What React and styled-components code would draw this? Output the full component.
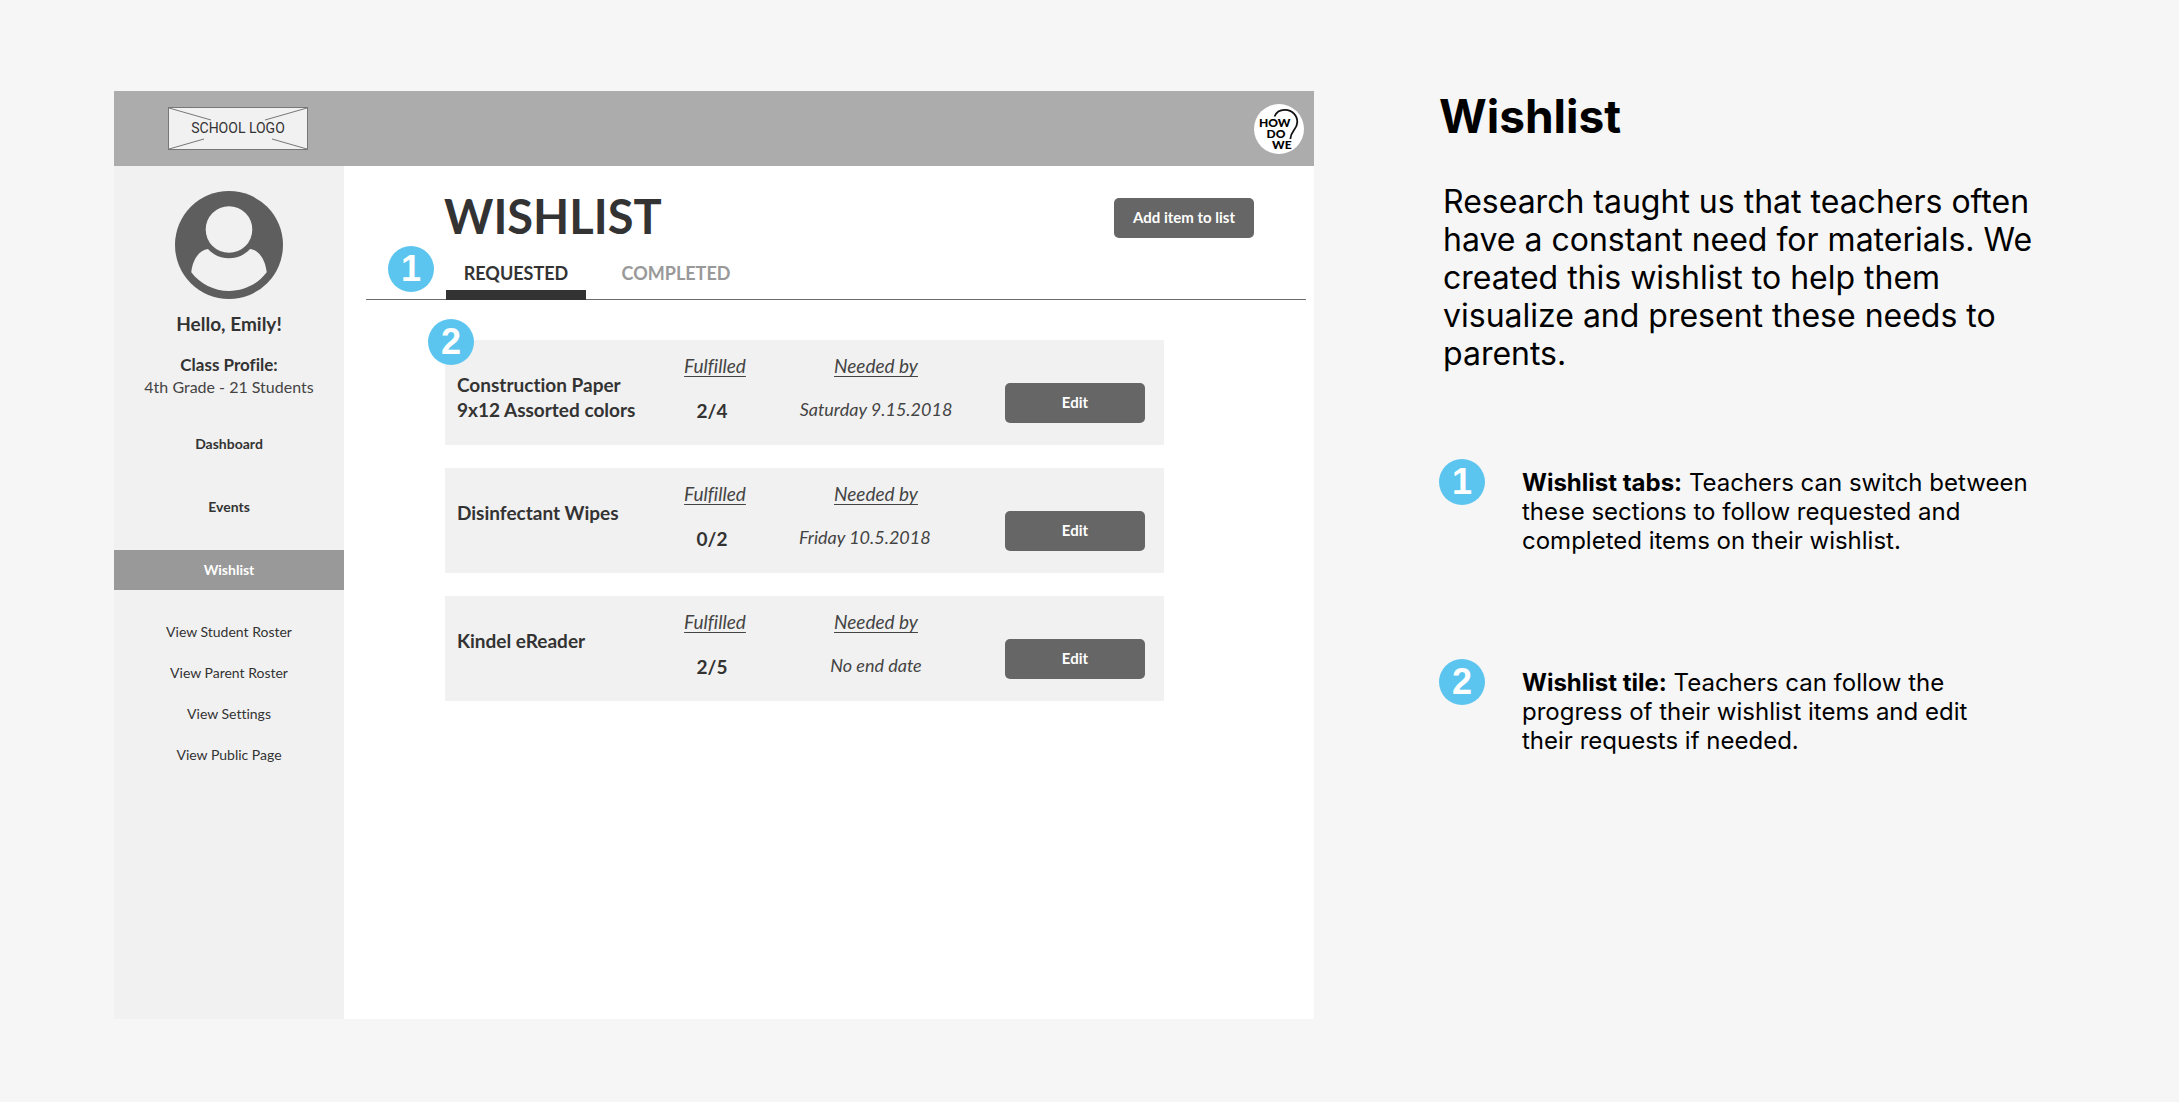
import React, { useState } from "react";
import styled, { createGlobalStyle } from "styled-components";

const humanist = `Lato, "Open Sans", sans-serif`;
const grotesque = `Inter, Roboto, sans-serif`;

const GlobalStyle = createGlobalStyle`
  *, *::before, *::after { box-sizing: border-box; }
  body {
    margin: 0;
    background: #f6f6f6;
    color: #333;
    font-family: ${humanist};
    font-variant-ligatures: none;
  }
  h1, h2, p, ul, ol { margin: 0; padding: 0; }
  ul, ol { list-style: none; }
  button { border: 0; margin: 0; padding: 0; font-family: inherit; cursor: pointer; }
  a { color: inherit; text-decoration: none; }
`;

const Page = styled.div`
  display: grid;
  grid-template-columns: minmax(0, 2fr) minmax(0, 1fr);
  gap: 125px;
  min-height: 100vh;
  padding: 91px 140px 83px 114px;
`;

const Frame = styled.div`
  display: flex;
  flex-direction: column;
  background: #fff;
`;

const Header = styled.header`
  display: flex;
  align-items: center;
  justify-content: space-between;
  height: 75px;
  padding: 0 10px 0 54px;
  background: #acacac;
`;

const Body = styled.div`
  display: flex;
  flex: 1;
`;

const Sidebar = styled.aside`
  display: flex;
  flex-direction: column;
  align-items: center;
  width: 230px;
  padding-top: 25px;
  background: #f1f1f1;
  text-align: center;
`;

const Greeting = styled.p`
  margin-top: 13px;
  font-size: 19px;
  line-height: 24px;
  font-weight: 700;
`;

const ProfileTitle = styled.p`
  margin-top: 18px;
  font-size: 17px;
  line-height: 22px;
  font-weight: 700;
`;

const ProfileText = styled.p`
  font-size: 16px;
  line-height: 22px;
  font-weight: 400;
  color: #444;
`;

const MainNav = styled.nav`
  display: flex;
  flex-direction: column;
  gap: 23px;
  width: 100%;
  margin-top: 26px;
`;

const MainNavLink = styled.a`
  font-size: 14px;
  line-height: 40px;
  font-weight: 700;
  color: ${(p) => (p.$active ? "#fff" : "#333")};
  background: ${(p) => (p.$active ? "#999" : "transparent")};
`;

const SubNav = styled.nav`
  display: flex;
  flex-direction: column;
  width: 100%;
  margin-top: 21px;
`;

const SubNavLink = styled.a`
  font-size: 14px;
  line-height: 41px;
`;

const Main = styled.main`
  flex: 1;
  min-width: 0;
  padding-top: 22px;
`;

const TitleRow = styled.div`
  display: flex;
  align-items: flex-start;
  justify-content: space-between;
  padding: 0 60px 0 100px;
`;

const Title = styled.h1`
  font-size: 47px;
  line-height: 56px;
  font-weight: 700;
`;

const Button = styled.button`
  width: 140px;
  height: 40px;
  padding-bottom: 3px;
  border-radius: 5px;
  background: #666;
  color: #fff;
  font-size: 15px;
  font-weight: 700;
`;

const AddButton = styled(Button)`
  margin-top: 10px;
`;

const Badge = styled.span`
  flex: none;
  width: 46px;
  height: 46px;
  border-radius: 50%;
  background: #5bc5ef;
  color: #fff;
  font: 700 36px/46px "Liberation Sans", Arial, sans-serif;
  text-align: center;
`;

const TabBar = styled.div`
  display: flex;
  align-items: flex-end;
  gap: 12px;
  margin: 2px 8px 0 22px;
  padding-left: 22px;
  border-bottom: 1px solid #6c6c6c;
`;

const TabBadge = styled(Badge)`
  margin-bottom: 7px;
`;

const Tabs = styled.div`
  display: flex;
  gap: 20px;
  margin-bottom: -1px;
`;

const Tab = styled.button`
  width: 140px;
  padding-bottom: 5px;
  border-bottom: 10px solid ${(p) => (p.$active ? "#333" : "transparent")};
  background: none;
  color: ${(p) => (p.$active ? "#333" : "#999")};
  font-size: 18px;
  line-height: 24px;
  font-weight: 700;
`;

const TileList = styled.ul`
  display: flex;
  flex-direction: column;
  gap: 23px;
  padding: 40px 150px 40px 101px;
`;

const Tile = styled.li`
  position: relative;
  display: flex;
  align-items: flex-start;
  min-height: 105px;
  padding: 0 19px 0 12px;
  background: #f1f1f1;
`;

const TileBadge = styled(Badge)`
  position: absolute;
  top: -21px;
  left: -17px;
`;

const ItemName = styled.h2`
  flex: 1;
  padding-top: 32px;
  font-size: 19px;
  line-height: 25px;
  font-weight: 700;
  white-space: pre-line;
`;

const Fact = styled.div`
  display: flex;
  flex-direction: column;
  gap: 19px;
  width: ${(p) => p.$width}px;
  margin-right: 52px;
  padding-top: 14px;
  text-align: center;
`;

const FactLabel = styled.p`
  font-size: 19px;
  line-height: 24px;
  font-style: italic;
  font-weight: 400;
  color: #444;
  text-decoration: underline;
  text-decoration-thickness: 1px;
  text-underline-offset: 3px;
  text-decoration-skip-ink: none;
`;

const Count = styled.p`
  padding-right: 6px;
  font-size: 19px;
  line-height: 28px;
  font-weight: 700;
`;

const DueDate = styled.p`
  font-size: 18px;
  line-height: 24px;
  font-style: italic;
  text-align: ${(p) => p.$align};
  white-space: nowrap;
  color: #444;
`;

const EditButton = styled(Button)`
  margin-top: 43px;
`;

const Notes = styled.aside`
  color: #000;
  font-family: ${grotesque};
`;

const NotesTitle = styled.h2`
  font-size: 46px;
  line-height: 50px;
  font-weight: 700;
`;

const Intro = styled.p`
  margin-top: 42px;
  padding-left: 4px;
  font-size: 32px;
  line-height: 38px;
`;

const NoteList = styled.ol`
  display: flex;
  flex-direction: column;
  gap: 104px;
  margin-top: 86px;
`;

const Note = styled.li`
  display: flex;
  align-items: flex-start;
  gap: 37px;
  padding-right: 8px;
`;

const NoteText = styled.p`
  padding-top: 9px;
  font-size: 24px;
  line-height: 29px;
`;

const LogoWord = styled.text`
  font: 900 12px Lato, sans-serif;
`;

const PlaceholderText = styled.text`
  font: 400 14px Roboto, sans-serif;
`;

function SchoolLogo() {
  return (
    <svg width="140" height="43" viewBox="0 0 140 43" role="img" aria-label="School logo">
      <rect x="0.5" y="0.5" width="139" height="42" fill="#f1f1f1" stroke="#777" />
      <path d="M1 1L43 13M139 1L97 13M1 42L36 32M139 42L104 32" stroke="#777" fill="none" />
      <PlaceholderText x="70" y="26" textAnchor="middle" fill="#333">SCHOOL LOGO</PlaceholderText>
    </svg>
  );
}

function BrandLogo() {
  return (
    <svg width="50" height="50" viewBox="0 0 50 50" role="img" aria-label="How do we">
      <circle cx="25" cy="25" r="25" fill="#fff" />
      <path
        d="M20.5 12.5C22.5 7.5 27 5.8 31 5.9C38.5 6.2 43.3 11.5 43.3 18C43.3 25.5 36.8 26.5 36.3 35"
        fill="none"
        stroke="#111"
        strokeWidth="1.8"
      />
      <LogoWord x="5" y="23">HOW</LogoWord>
      <LogoWord x="12.5" y="34">DO</LogoWord>
      <LogoWord x="18" y="45">WE</LogoWord>
    </svg>
  );
}

function Avatar() {
  return (
    <svg width="108" height="108" viewBox="0 0 108 108" role="img" aria-label="Emily">
      <circle cx="54" cy="54" r="54" fill="#5e5e5e" />
      <circle cx="54" cy="38.5" r="23.3" fill="#f1f1f1" />
      <path
        d="M33 58C24 59 17.5 69 16.3 81.3C25 93 39 100 54 100C69 100 83 93 91.7 81.3C90.5 69 84 59 75 58C64 70.4 44 70.4 33 58Z"
        fill="#f1f1f1"
      />
    </svg>
  );
}

const mainLinks = ["Dashboard", "Events", "Wishlist"];
const subLinks = ["View Student Roster", "View Parent Roster", "View Settings", "View Public Page"];
const tabs = ["REQUESTED", "COMPLETED"];
const items = [
  { name: "Construction Paper\n9x12 Assorted colors", count: "2/4", due: "Saturday 9.15.2018", badge: "2" },
  { name: "Disinfectant Wipes", count: "0/2", due: "Friday 10.5.2018", align: "left" },
  { name: "Kindel eReader", count: "2/5", due: "No end date" },
];
const notes = [
  {
    title: "Wishlist tabs:",
    text: "Teachers can switch between these sections to follow requested and completed items on their wishlist.",
  },
  {
    title: "Wishlist tile:",
    text: "Teachers can follow the progress of their wishlist items and edit their\u00a0requests if needed.",
  },
];

export default function App() {
  const [tab, setTab] = useState(tabs[0]);
  return (
    <>
      <GlobalStyle />
      <Page>
        <Frame>
          <Header>
            <SchoolLogo />
            <BrandLogo />
          </Header>
          <Body>
            <Sidebar>
              <Avatar />
              <Greeting>Hello, Emily!</Greeting>
              <ProfileTitle>Class Profile:</ProfileTitle>
              <ProfileText>4th Grade - 21 Students</ProfileText>
              <MainNav>
                {mainLinks.map((label) => (
                  <MainNavLink key={label} href="#" $active={label === "Wishlist"}>
                    {label}
                  </MainNavLink>
                ))}
              </MainNav>
              <SubNav>
                {subLinks.map((label) => (
                  <SubNavLink key={label} href="#">{label}</SubNavLink>
                ))}
              </SubNav>
            </Sidebar>
            <Main>
              <TitleRow>
                <Title>WISHLIST</Title>
                <AddButton>Add item to list</AddButton>
              </TitleRow>
              <TabBar>
                <TabBadge>1</TabBadge>
                <Tabs role="tablist">
                  {tabs.map((label) => (
                    <Tab
                      key={label}
                      role="tab"
                      aria-selected={label === tab}
                      $active={label === tab}
                      onClick={() => setTab(label)}
                    >
                      {label}
                    </Tab>
                  ))}
                </Tabs>
              </TabBar>
              <TileList>
                {items.map((item) => (
                  <Tile key={item.name}>
                    {item.badge && <TileBadge>{item.badge}</TileBadge>}
                    <ItemName>{item.name}</ItemName>
                    <Fact $width={64}>
                      <FactLabel>Fulfilled</FactLabel>
                      <Count>{item.count}</Count>
                    </Fact>
                    <Fact $width={154}>
                      <FactLabel>Needed by</FactLabel>
                      <DueDate $align={item.align || "center"}>{item.due}</DueDate>
                    </Fact>
                    <EditButton>Edit</EditButton>
                  </Tile>
                ))}
              </TileList>
            </Main>
          </Body>
        </Frame>
        <Notes>
          <NotesTitle>Wishlist</NotesTitle>
          <Intro>
            Research taught us that teachers often have a constant need for materials. We created
            this wishlist to help them visualize and present these needs to parents.
          </Intro>
          <NoteList>
            {notes.map((note, i) => (
              <Note key={note.title}>
                <Badge>{i + 1}</Badge>
                <NoteText>
                  <strong>{note.title}</strong> {note.text}
                </NoteText>
              </Note>
            ))}
          </NoteList>
        </Notes>
      </Page>
    </>
  );
}
